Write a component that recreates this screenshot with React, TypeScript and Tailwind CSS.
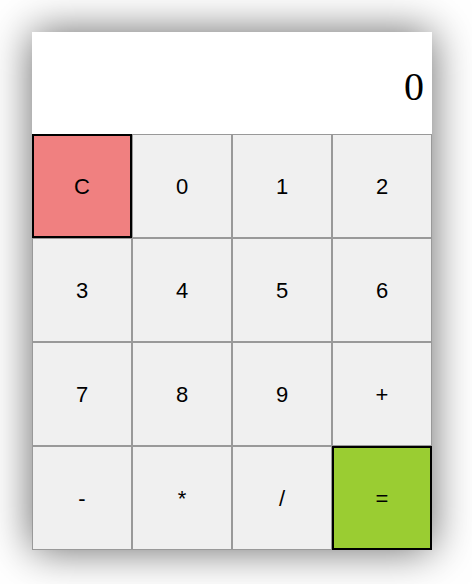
import React, { useState } from 'react';

const keys = ['C', '0', '1', '2', '3', '4', '5', '6', '7', '8', '9', '+', '-', '*', '/', '='];

const App: React.FC = () => {
  const [display, setDisplay] = useState('0');

  const press = (k: string) => {
    if (k === 'C') return setDisplay('0');
    if (k === '=') {
      try {
        // eslint-disable-next-line no-new-func
        setDisplay(String(Function(`return (${display})`)()));
      } catch {
        setDisplay('Error');
      }
      return;
    }
    setDisplay(prev => (prev === '0' ? k : prev + k));
  };

  const keyClass = (k: string) => {
    if (k === 'C') return 'bg-[#f08080] border-2 border-black';
    if (k === '=') return 'bg-[#9acd32] border-2 border-black';
    return 'bg-[#f0f0f0] border border-[#999999]';
  };

  return (
    <div className="w-[472px] h-[584px] bg-white pt-8 pl-8">
      <div className="w-[400px] bg-white shadow-[0_0_40px_rgba(0,0,0,0.6)]">
        <div className="h-[102px] flex items-center justify-end pr-2 pt-2 text-[40px] text-black font-['Liberation_Serif',serif]">
          {display}
        </div>
        <div className="grid grid-cols-4">
          {keys.map(k => (
            <button
              key={k}
              onClick={() => press(k)}
              className={`h-[104px] text-[22px] text-black font-['Liberation_Sans',Arial,sans-serif] ${keyClass(k)}`}
            >
              {k}
            </button>
          ))}
        </div>
      </div>
    </div>
  );
};

export default App;
